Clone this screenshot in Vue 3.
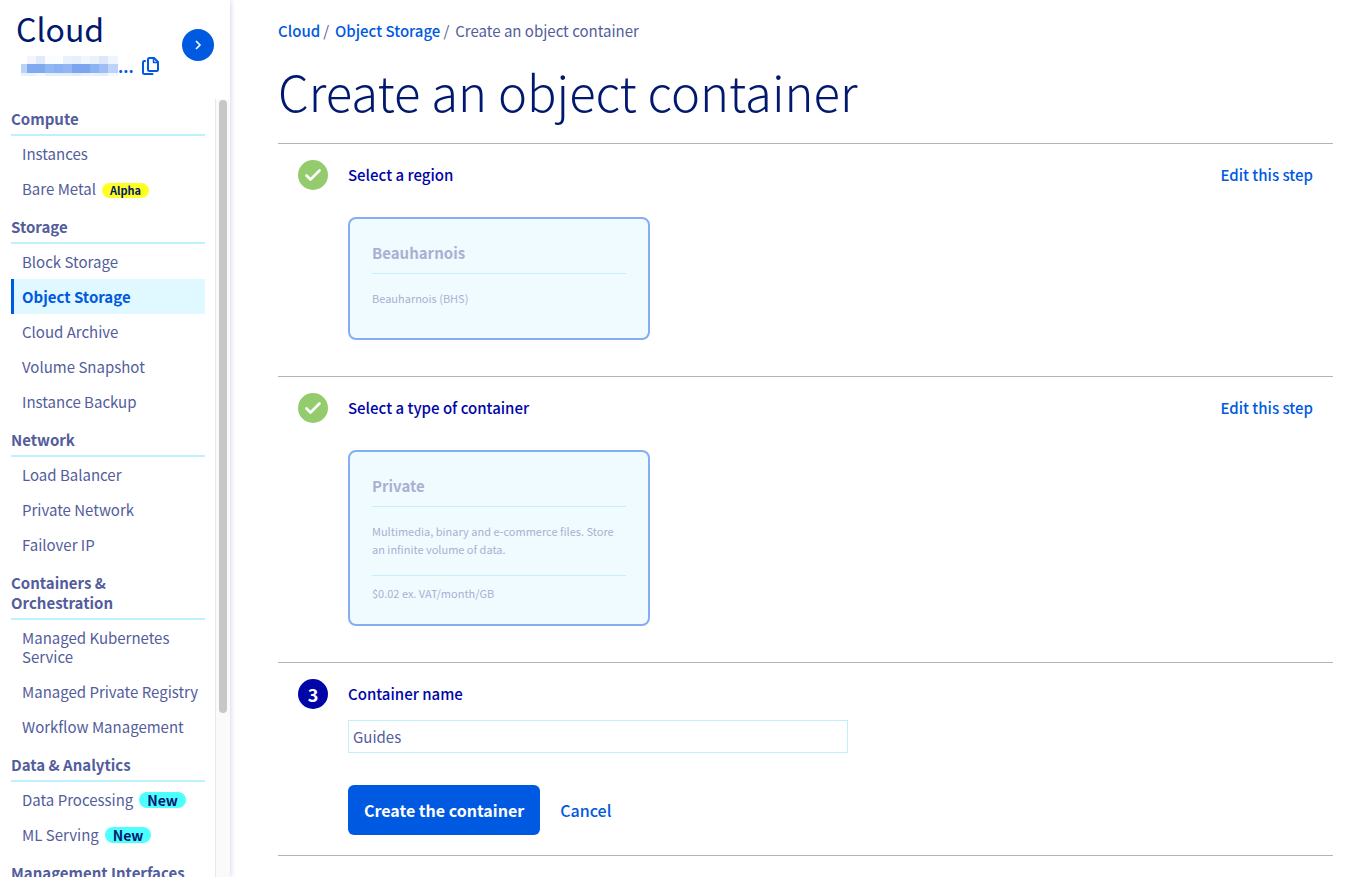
<script setup>
import { ref } from 'vue'

const name = ref('Guides')

const groups = [
  { title: 'Compute', items: [{ label: 'Instances' }, { label: 'Bare Metal', badge: 'Alpha', kind: 'alpha' }] },
  {
    title: 'Storage',
    items: [
      { label: 'Block Storage' },
      { label: 'Object Storage', active: true },
      { label: 'Cloud Archive' },
      { label: 'Volume Snapshot' },
      { label: 'Instance Backup' },
    ],
  },
  { title: 'Network', items: [{ label: 'Load Balancer' }, { label: 'Private Network' }, { label: 'Failover IP' }] },
  {
    title: 'Containers & Orchestration',
    items: [{ label: 'Managed Kubernetes Service' }, { label: 'Managed Private Registry' }, { label: 'Workflow Management' }],
  },
  {
    title: 'Data & Analytics',
    items: [
      { label: 'Data Processing', badge: 'New', kind: 'new' },
      { label: 'ML Serving', badge: 'New', kind: 'new' },
    ],
  },
  { title: 'Management Interfaces', items: [] },
]

const maskRows = [
  { y: 0, h: 8, colors: ['#ffffff', '#f1f6fd', '#dfeafa', '#fbfcff', '#fbfcff', '#e9f1fd', '#e6effc', '#f1f6fd', '#e9f1fd', '#dce8fa', '#f0f5fd'] },
  { y: 8, h: 9, colors: ['#b9d2f7', '#80aaf0', '#80aaf0', '#91b6f2', '#8ab1f1', '#91b6f2', '#7ba6ef', '#7ba6ef', '#8cb3f1', '#9dbef3', '#bcd4f8'] },
  { y: 17, h: 3, colors: ['#e9f1fd', '#e9f1fd', '#f3f7fe', '#e3edfc', '#e3edfc', '#e3edfc', '#dfeafb', '#e9f1fd', '#e9f1fd', '#e3edfc', '#f3f7fe'] },
]
</script>

<template>
  <div class="layout">
    <aside class="sidebar">
      <header class="project">
        <div class="project-info">
          <div class="project-name">Cloud</div>
          <div class="project-id">
            <svg class="mask" width="97" height="20" viewBox="0 0 97 20" shape-rendering="crispEdges" aria-hidden="true">
              <template v-for="row in maskRows" :key="row.y">
                <rect v-for="(c, i) in row.colors" :key="i" :x="i === 0 ? 0 : i * 9 - 3" :y="row.y" :width="i === 0 ? 6 : 10" :height="row.h" :fill="c" />
              </template>
            </svg>
            <span class="dots">...</span>
            <button class="copy" type="button" aria-label="Copy project ID">
              <svg width="18" height="20" viewBox="0 -1 18 20" fill="none" stroke="#0059e1" stroke-width="2" stroke-linejoin="round" stroke-linecap="round">
                <path d="M12 1H7.500Q6 1 6 2.500V12.500Q6 14 7.500 14H14.500Q16 14 16 12.500V5Z" />
                <path d="M11.500 1.500V5.500H15.500" stroke-width="1.500" />
                <path d="M3 4H2.500Q1 4 1 5.500V15.500Q1 17 2.500 17H10.500" />
              </svg>
            </button>
          </div>
        </div>
        <button class="toggle" type="button" aria-label="Expand menu">
          <svg width="10" height="12" viewBox="0 0 10 12" fill="none" stroke="#fff" stroke-width="1.600"><path d="M3 2 7 6 3 10" /></svg>
        </button>
      </header>
      <div class="menu-area">
        <nav class="menu">
          <section v-for="g in groups" :key="g.title" class="group">
            <h2>{{ g.title }}</h2>
            <ul>
              <li v-for="item in g.items" :key="item.label">
                <a href="#" :class="{ active: item.active }">{{ item.label }}<span v-if="item.badge" class="badge" :class="item.kind">{{ item.badge }}</span></a>
              </li>
            </ul>
          </section>
        </nav>
        <div class="track"><div class="thumb"></div></div>
      </div>
    </aside>

    <main class="content">
      <nav class="crumbs" aria-label="Breadcrumb">
        <a href="#">Cloud</a><span class="sep">/</span><a href="#">Object Storage</a><span class="sep">/</span><span>Create an object container</span>
      </nav>
      <h1>Create an object container</h1>

      <section class="step">
        <span class="mark done">
          <svg width="18" height="14" viewBox="0 0 18 14" fill="none" stroke="#fff" stroke-width="2.600" stroke-linecap="round" stroke-linejoin="round"><path d="M2.500 7.500 6.500 11.500 15.500 2.500" /></svg>
        </span>
        <div class="step-body">
          <div class="step-head"><h3>Select a region</h3><a href="#">Edit this step</a></div>
          <article class="card region">
            <h4>Beauharnois</h4>
            <p>Beauharnois (BHS)</p>
          </article>
        </div>
      </section>

      <section class="step">
        <span class="mark done">
          <svg width="18" height="14" viewBox="0 0 18 14" fill="none" stroke="#fff" stroke-width="2.600" stroke-linecap="round" stroke-linejoin="round"><path d="M2.500 7.500 6.500 11.500 15.500 2.500" /></svg>
        </span>
        <div class="step-body">
          <div class="step-head"><h3>Select a type of container</h3><a href="#">Edit this step</a></div>
          <article class="card">
            <h4>Private</h4>
            <p>Multimedia, binary and e-commerce files. Store an infinite volume of data.</p>
            <p class="price">$0.02 ex. VAT/month/GB</p>
          </article>
        </div>
      </section>

      <section class="step last">
        <span class="mark current">3</span>
        <form class="step-body" @submit.prevent>
          <div class="step-head"><h3><label for="container-name">Container name</label></h3></div>
          <input id="container-name" v-model="name" type="text" />
          <div class="actions">
            <button class="primary" type="submit">Create the container</button>
            <button class="cancel" type="button">Cancel</button>
          </div>
        </form>
      </section>
    </main>
  </div>
</template>

<style>
body {
  margin: 0;
  background: #fff;
}
</style>

<style scoped>
* {
  box-sizing: border-box;
}
.layout {
  display: flex;
  height: 100vh;
  overflow: hidden;
  font-family: "Noto Sans CJK SC", "Noto Sans", sans-serif;
  font-size: 15px;
  line-height: 20px;
  color: #535d9c;
}
h1, h2, h3, h4, p, ul {
  margin: 0;
  padding: 0;
}
ul {
  list-style: none;
}
a {
  color: #0059e1;
  text-decoration: none;
}
button {
  font: inherit;
  border: 0;
  padding: 0;
  background: none;
  cursor: pointer;
}
svg {
  display: block;
}
.sidebar {
  display: flex;
  flex-direction: column;
  flex: none;
  width: 230px;
  box-shadow: 1px 0 5px rgba(20, 0, 180, 0.17);
}
.project {
  display: flex;
  justify-content: space-between;
  flex: none;
  height: 99px;
  padding: 8px 16px 0;
}
.project-name {
  font-size: 32px;
  line-height: 40px;
  color: #00196f;
}
.project-id {
  display: flex;
  align-items: center;
  height: 20px;
  margin: 8px 0 0 5px;
  color: #0059e1;
}
.dots {
  width: 16px;
  font-size: 16px;
  font-weight: 700;
}
.copy {
  margin-left: 8px;
}
.toggle {
  display: flex;
  align-items: center;
  justify-content: center;
  width: 32px;
  height: 32px;
  margin-top: 21px;
  border-radius: 50%;
  background: #0059e1;
}
.menu-area {
  display: flex;
  flex: 1;
  min-height: 0;
  overflow: hidden;
}
.menu {
  flex: 1;
  min-width: 0;
  padding: 10px 10px 0 11px;
}
.group h2 {
  padding-bottom: 5px;
  border-bottom: 2px solid #bef1ff;
  font-size: 15px;
  line-height: 20px;
  font-weight: 700;
}
.group ul {
  padding-bottom: 11px;
}
.group a {
  display: block;
  padding: 8px 0 8px 11px;
  line-height: 19px;
  color: #535d9c;
}
.group a.active {
  padding-left: 8px;
  border-left: 3px solid #0059e1;
  background: #e0f8ff;
  color: #0059e1;
  font-weight: 700;
}
.badge {
  display: inline-block;
  margin-left: 6px;
  padding: 0 8px;
  border-radius: 8px;
  line-height: 16px;
  font-weight: 700;
  color: #00196f;
}
.badge.alpha {
  font-size: 11px;
  line-height: 15px;
  background: #ff2;
}
.badge.new {
  font-size: 14px;
  background: #4dffff;
}
.track {
  flex: none;
  width: 15px;
  padding: 1px 3px;
  border-left: 1px solid #e8e8e8;
  background: #fafafa;
}
.thumb {
  height: 79%;
  border-radius: 4px;
  background: #c7c7c7;
}
.content {
  flex: 1;
  min-width: 0;
  padding: 21px 12px 0 48px;
}
.crumbs a {
  font-weight: 500;
}
.sep {
  margin: 0 6px 0 3px;
}
h1 {
  padding: 18px 0 20px;
  font-size: 49px;
  line-height: 64px;
  font-weight: 300;
  color: #00196f;
}
.step {
  display: flex;
  gap: 20px;
  padding: 16px 20px 36px;
  border-top: 1px solid #b3b3b3;
}
.mark {
  display: flex;
  align-items: center;
  justify-content: center;
  flex: none;
  width: 30px;
  height: 30px;
  border-radius: 50%;
  color: #fff;
  font-size: 18px;
  font-weight: 700;
}
.mark.done {
  background: #93cb6d;
}
.mark.current {
  background: #0005a8;
}
.step-body {
  flex: 1;
}
.step-head {
  display: flex;
  align-items: center;
  justify-content: space-between;
  height: 30px;
}
.step-head h3 {
  font-size: 15px;
  font-weight: 500;
  color: #0005a8;
}
.step-head a {
  font-weight: 500;
}
.card {
  width: 302px;
  margin-top: 27px;
  padding: 23px 22px 22px;
  border: 2px solid #85aef2;
  border-radius: 8px;
  background: #f0fbff;
  color: #a9b0d2;
  font-size: 11px;
  line-height: 18px;
}
.card h4 {
  padding-bottom: 10px;
  margin-bottom: 15px;
  border-bottom: 1px solid #c5effa;
  font-size: 15px;
  line-height: 21px;
  font-weight: 700;
}
.region p {
  padding-bottom: 9px;
}
.price {
  margin-top: 17px;
  padding-top: 8px;
  border-top: 1px solid #c5effa;
}
input {
  display: block;
  width: 100%;
  max-width: 500px;
  height: 33px;
  margin-top: 11px;
  padding: 0 4px;
  border: 1px solid #bef1ff;
  border-radius: 0;
  background: #fff;
  font: inherit;
  color: #535d9c;
}
.actions {
  display: flex;
  align-items: center;
  gap: 20px;
  margin-top: 32px;
}
.primary {
  height: 50px;
  padding: 0 16px;
  border-radius: 6px;
  background: #0059e1;
  color: #fff;
  font-size: 16px;
  font-weight: 700;
}
.cancel {
  color: #0059e1;
  font-size: 16px;
  font-weight: 500;
}
.last {
  padding-bottom: 20px;
  border-bottom: 1px solid #b3b3b3;
}
</style>
